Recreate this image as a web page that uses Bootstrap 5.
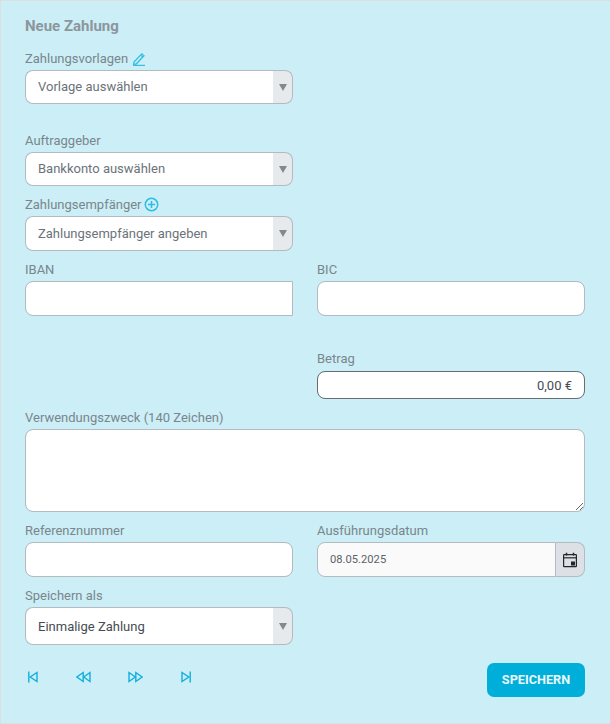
<!DOCTYPE html>
<html lang="de">
<head>
    <meta charset="UTF-8">
    <title>Neue Zahlung</title>
    <link href="https://cdn.jsdelivr.net/npm/bootstrap@5.3.3/dist/css/bootstrap.min.css" rel="stylesheet">
    <style>
        body {
            background: #cbeef7;
            font-family: Roboto, "Liberation Sans", sans-serif;
            font-size: 13px;
        }

        .zahlung-panel {
            width: 610px;
            height: 724px;
            padding: 17px 25px 0 24px;
            border: 1px solid #dcdfe1;
            border-width: 1px 0 1px 1px;
            overflow: hidden;
        }

        .panel-titel {
            font-size: 15px;
            line-height: 16px;
            font-weight: 700;
            color: #8c969c;
            margin: 0 0 16px;
        }

        .feld {
            margin-bottom: 10px;
        }

        .feld-gross {
            margin-bottom: 28px;
        }

        .feld-label {
            display: flex;
            align-items: center;
            gap: 3px;
            font-size: 13px;
            line-height: 16px;
            color: #7a868c;
            padding-top: 1px;
            margin-bottom: 3px;
        }

        .form-control,
        .form-select {
            font-size: 13px;
            color: #6b7379;
            border-color: #b4bbc0;
            border-radius: 8px;
            padding: 0 12px;
            box-shadow: none;
        }

        .input-group > .form-select {
            background-image: none;
            padding-right: 12px;
            border-right: 0;
        }

        .h-34 { height: 34px; }
        .h-35 { height: 35px; }
        .input-group > .h-38 { height: 38px; padding-top: 1px; }

        .wahl-pfeil {
            width: 21px;
            padding: 0;
            justify-content: center;
            background: #e7eaed;
            border-color: #b4bbc0;
            border-left-color: #dcdfe3;
            border-radius: 0 8px 8px 0;
        }

        .wahl-pfeil::after {
            content: "";
            border-left: 4.5px solid transparent;
            border-right: 4.5px solid transparent;
            border-top: 7px solid #85898d;
        }

        .text-dunkel {
            color: #454c52;
        }

        .iban-feld {
            height: 35px;
            border-radius: 8px 0 0 8px;
        }

        .bic-feld {
            height: 35px;
        }

        .luecke-betrag {
            margin-top: 34px;
        }

        .feld-label.betrag-label {
            margin-bottom: 4px;
        }

        .betrag-feld {
            height: 28px;
            border-color: #676d73;
            color: #454c52;
            text-align: right;
        }

        .zweck-feld {
            height: 83px;
            resize: vertical;
        }

        .datum-feld {
            height: 35px;
            font-size: 11.2px;
            background: #fafafa;
            color: #5b6269;
        }

        .datum-knopf {
            width: 30px;
            padding: 0;
            justify-content: center;
            background: #dde0e4;
            border-color: #b4bbc0;
            border-left-color: #dde0e4;
            border-radius: 0 8px 8px 0;
        }

        .stift-icon {
            margin-left: 1px;
        }

        .plus-icon {
            margin: -2px 0 0 -1px;
        }

        .fuss-zeile {
            margin-top: 18px;
        }

        .blaettern {
            display: flex;
            gap: 37.5px;
            margin-top: 8px;
            margin-left: 3px;
        }

        .blaettern a {
            display: block;
            line-height: 0;
        }

        .btn-speichern {
            width: 98px;
            height: 34px;
            padding: 0;
            font-size: 12.7px;
            font-weight: 700;
            color: #e9f8fc;
            background: #00aeda;
            border: 0;
            border-radius: 7px;
        }
    </style>
</head>
<body>

<div class="zahlung-panel">
    <h2 class="panel-titel">Neue Zahlung</h2>

    <div class="row gx-4">
        <div class="col-6">
            <div class="feld-gross">
                <label class="feld-label">Zahlungsvorlagen
                    <svg class="stift-icon" width="14" height="14" viewBox="0 0 14 14" fill="none" stroke="#35bfe3" stroke-width="1.3">
                        <path d="M2 10 L9.8 1.8 L12 3.8 L4.2 12 L1.6 12.2 Z"/>
                        <path d="M8.6 3 L10.8 5.1"/>
                        <path d="M1 13.4 H13"/>
                    </svg>
                </label>
                <div class="input-group">
                    <select class="form-select h-34"><option>Vorlage auswählen</option></select>
                    <span class="input-group-text wahl-pfeil"></span>
                </div>
            </div>

            <div class="feld">
                <label class="feld-label">Auftraggeber</label>
                <div class="input-group">
                    <select class="form-select h-34"><option>Bankkonto auswählen</option></select>
                    <span class="input-group-text wahl-pfeil"></span>
                </div>
            </div>

            <div class="feld">
                <label class="feld-label">Zahlungsempfänger
                    <svg class="plus-icon" width="15" height="15" viewBox="0 0 15 15" fill="none" stroke="#2dbce2" stroke-width="1.5">
                        <circle cx="7.5" cy="7.5" r="6.2"/>
                        <path d="M7.5 4 V11 M4 7.5 H11"/>
                    </svg>
                </label>
                <div class="input-group">
                    <select class="form-select h-35"><option>Zahlungsempfänger angeben</option></select>
                    <span class="input-group-text wahl-pfeil"></span>
                </div>
            </div>
        </div>
    </div>

    <div class="row gx-4">
        <div class="col-6">
            <label class="feld-label">IBAN</label>
            <input type="text" class="form-control iban-feld">
        </div>
        <div class="col-6">
            <label class="feld-label">BIC</label>
            <input type="text" class="form-control bic-feld">
        </div>
    </div>

    <div class="row gx-4 luecke-betrag feld">
        <div class="col-6 offset-6">
            <label class="feld-label betrag-label">Betrag</label>
            <input type="text" class="form-control betrag-feld" value="0,00 €">
        </div>
    </div>

    <div class="feld">
        <label class="feld-label">Verwendungszweck (140 Zeichen)</label>
        <textarea class="form-control zweck-feld"></textarea>
    </div>

    <div class="row gx-4 feld">
        <div class="col-6">
            <label class="feld-label">Referenznummer</label>
            <input type="text" class="form-control h-35">
        </div>
        <div class="col-6">
            <label class="feld-label">Ausführungsdatum</label>
            <div class="input-group">
                <input type="text" class="form-control datum-feld" value="08.05.2025">
                <span class="input-group-text datum-knopf">
                    <svg width="16" height="16" viewBox="0 0 16 16" fill="none" stroke="#23272b" stroke-width="1.2">
                        <rect x="1.6" y="2.6" width="12.8" height="12" rx="0.6"/>
                        <path d="M1.6 5.8 H14.4"/>
                        <path d="M4.5 0.8 V3.4 M11.5 0.8 V3.4" stroke-width="1.5"/>
                        <rect x="9" y="9.5" width="4" height="4" fill="#23272b" stroke="none"/>
                    </svg>
                </span>
            </div>
        </div>
    </div>

    <div class="row gx-4">
        <div class="col-6">
            <label class="feld-label">Speichern als</label>
            <div class="input-group">
                <select class="form-select h-38 text-dunkel"><option>Einmalige Zahlung</option></select>
                <span class="input-group-text wahl-pfeil"></span>
            </div>
        </div>
    </div>

    <div class="d-flex justify-content-between align-items-start fuss-zeile">
        <div class="blaettern">
            <a href="#"><svg width="10" height="12" viewBox="0 0 10 12" fill="none" stroke="#12aede" stroke-width="1.4"><path d="M0.8 0.5 V11.5"/><path d="M9 1.5 V10.5 L2.2 6 Z"/></svg></a>
            <a href="#"><svg width="15" height="12" viewBox="0 0 15 12" fill="none" stroke="#12aede" stroke-width="1.4"><path d="M7.2 1.5 V10.5 L0.9 6 Z"/><path d="M14 1.5 V10.5 L7.7 6 Z"/></svg></a>
            <a href="#"><svg width="15" height="12" viewBox="0 0 15 12" fill="none" stroke="#12aede" stroke-width="1.4"><path d="M1 1.5 V10.5 L7.3 6 Z"/><path d="M7.8 1.5 V10.5 L14.1 6 Z"/></svg></a>
            <a href="#"><svg width="10" height="12" viewBox="0 0 10 12" fill="none" stroke="#12aede" stroke-width="1.4"><path d="M9.2 0.5 V11.5"/><path d="M1 1.5 V10.5 L7.8 6 Z"/></svg></a>
        </div>
        <button type="button" class="btn btn-speichern">SPEICHERN</button>
    </div>
</div>

<script src="https://cdn.jsdelivr.net/npm/bootstrap@5.3.3/dist/js/bootstrap.bundle.min.js"></script>
</body>
</html>
